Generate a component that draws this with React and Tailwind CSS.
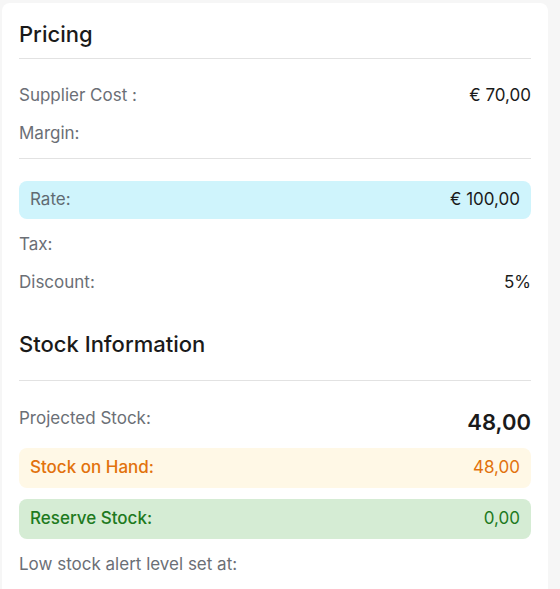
import React from "react";

function Row({ label, value, valueClass = "text-[#1a1a1a]", className = "" }) {
  return (
    <div className={`flex items-center justify-between h-[38px] ${className}`}>
      <span className="text-[#6b6f76]">{label}</span>
      {value && <span className={valueClass}>{value}</span>}
    </div>
  );
}

function Pill({ label, value, bg, text, className = "" }) {
  return (
    <div
      className={`flex items-center justify-between rounded-lg px-[11px] ${bg} ${className}`}
    >
      <span className={text.label}>{label}</span>
      <span className={text.value}>{value}</span>
    </div>
  );
}

export default function App() {
  return (
    <div
      className="h-[589px] bg-[#f6f6f6] pt-[3px] pl-[2px] pr-[12px] overflow-hidden"
      style={{ fontFamily: "Inter, 'Noto Sans', sans-serif" }}
    >
      <div className="bg-white rounded-t-lg px-[17px] pt-[17px] pb-8 text-[17px] h-[640px]">
        {/* Pricing */}
        <h2 className="text-[22px] leading-[28px] font-medium text-[#1a1a1a]">Pricing</h2>
        <div className="mt-[10px] border-t border-[#e2e2e2]" />

        <Row className="mt-[18px]" label="Supplier Cost :" value="€ 70,00" />
        <Row label="Margin:" />
        <div className="mt-[5px] border-t border-[#e2e2e2]" />

        <Pill
          className="mt-[22px] h-[38px]"
          bg="bg-[#cff4fc]"
          label="Rate:"
          value="€ 100,00"
          text={{ label: "text-[#5f6b73]", value: "text-[#1a1a1a]" }}
        />
        <Row className="mt-[7px]" label="Tax:" />
        <Row label="Discount:" value="5%" />

        {/* Stock Information */}
        <h2 className="mt-[28px] text-[22px] leading-[28px] font-medium text-[#1a1a1a]">
          Stock Information
        </h2>
        <div className="mt-[22px] border-t border-[#e2e2e2]" />

        <Row
          className="mt-[19px]"
          label="Projected Stock:"
          value="48,00"
          valueClass="text-[22px] font-semibold text-[#1a1a1a] mt-[6px]"
        />
        <Pill
          className="mt-[10px] h-[40px]"
          bg="bg-[#fff8e6]"
          label="Stock on Hand:"
          value="48,00"
          text={{ label: "text-[#e2720d] font-medium", value: "text-[#e2720d]" }}
        />
        <Pill
          className="mt-[11px] h-[40px]"
          bg="bg-[#d5ecd4]"
          label="Reserve Stock:"
          value="0,00"
          text={{ label: "text-[#1e7a1e] font-medium", value: "text-[#1e7a1e]" }}
        />
        <Row className="mt-[7px]" label="Low stock alert level set at:" />
      </div>
    </div>
  );
}
